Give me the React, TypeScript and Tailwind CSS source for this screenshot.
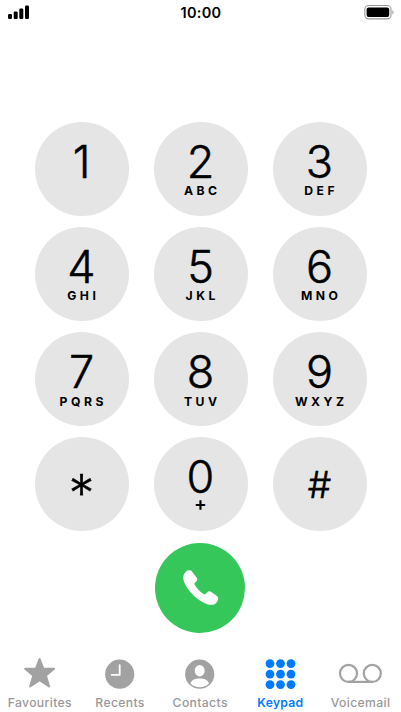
import React from "react";

const font = "font-['Inter','Liberation_Sans',sans-serif]";

type KeyDef = { digit: string; letters?: string };

const keys: KeyDef[] = [
  { digit: "1" },
  { digit: "2", letters: "ABC" },
  { digit: "3", letters: "DEF" },
  { digit: "4", letters: "GHI" },
  { digit: "5", letters: "JKL" },
  { digit: "6", letters: "MNO" },
  { digit: "7", letters: "PQRS" },
  { digit: "8", letters: "TUV" },
  { digit: "9", letters: "WXYZ" },
  { digit: "*" },
  { digit: "0", letters: "+" },
  { digit: "#" },
];

function KeyButton({ digit, letters }: KeyDef) {
  const base = "flex h-[94px] w-[94px] flex-col items-center rounded-full bg-[#e5e5e5] text-black";
  if (digit === "*") {
    return (
      <button className={base}>
        <span className="pt-[30.5px] text-[52px] font-light leading-[52px] [-webkit-text-stroke:0.3px_black]">*</span>
      </button>
    );
  }
  if (digit === "#") {
    return (
      <button className={base}>
        <span className="pt-[29px] text-[37px] font-light leading-[37px] [-webkit-text-stroke:0.6px_black]">#</span>
      </button>
    );
  }
  return (
    <button className={base}>
      <span className="pt-[17px] text-[45px] font-light leading-[45px] [-webkit-text-stroke:0.5px_black]">{digit}</span>
      {letters === "+" ? (
        <span className="-mt-[5px] text-[19px] font-semibold leading-[19px]">+</span>
      ) : (
        <span className="mt-[1.5px] pl-[3.5px] text-[12.2px] font-bold leading-[12px] tracking-[3.5px]">{letters}</span>
      )}
    </button>
  );
}

function StatusBar() {
  return (
    <header className="flex h-[26px] items-start justify-between pl-2 pr-[6px]">
      <svg className="mt-[5px] h-[14px] w-[30px]" viewBox="0 0 30 14">
        <rect x="0" y="9" width="4" height="5" rx="1.2" />
        <rect x="5.7" y="6.5" width="4" height="7.5" rx="1.2" />
        <rect x="11.3" y="3.5" width="4" height="10.5" rx="1.2" />
        <rect x="17" y="0.5" width="4" height="13.5" rx="1.2" />
      </svg>
      <span className="mt-[5px] text-[14.5px] font-semibold leading-4 tracking-[0.3px]">10:00</span>
      <svg className="mt-[4px] h-4 w-[31px]" viewBox="0 0 31 16">
        <rect x="0.8" y="1.5" width="26.2" height="13.4" rx="3.8" fill="none" stroke="#999" strokeWidth="1.1" />
        <rect x="2.6" y="3.4" width="22.6" height="9.7" rx="2" />
        <path d="M28.3 6v4.6c1.8-.8 1.8-3.8 0-4.6Z" fill="#aaa" />
      </svg>
    </header>
  );
}

function StarIcon() {
  return (
    <svg className="h-8 w-8" viewBox="0 0 32 32" fill="#a2a2a2" stroke="#a2a2a2" strokeWidth="2" strokeLinejoin="round">
      <path d="m15.6 2 3.8 9.8h10.7l-8.2 6.7 3.2 11-9.5-6.3-9.5 6.3 3.2-11-8.2-6.7h10.7Z" />
    </svg>
  );
}

function ClockIcon() {
  return (
    <svg className="h-8 w-8" viewBox="0 0 32 32">
      <circle cx="15.7" cy="17.2" r="14.6" fill="#a2a2a2" />
      <path d="M15.7 8.2v9.7H7.7" fill="none" stroke="#fff" strokeWidth="1.8" strokeLinecap="round" strokeLinejoin="round" />
    </svg>
  );
}

function ContactIcon() {
  return (
    <svg className="h-8 w-8" viewBox="0 0 32 32">
      <circle cx="15.7" cy="17.2" r="14.6" fill="#a2a2a2" />
      <ellipse cx="15.7" cy="13.8" rx="5" ry="5.7" fill="#fff" />
      <path d="M6.4 26.4c1.5-3.8 5.2-4.8 9.3-4.8s7.8 1 9.3 4.8a13.2 13.2 0 0 1-18.6 0Z" fill="#fff" />
    </svg>
  );
}

function KeypadIcon() {
  const positions = [5, 15.5, 26];
  return (
    <svg className="h-8 w-8" viewBox="0 0 32 32" fill="#007aff">
      {positions.map((y) =>
        positions.map((x) => <circle key={`${x}-${y}`} cx={x} cy={y + 1.6} r="4.4" />)
      )}
    </svg>
  );
}

function VoicemailIcon() {
  return (
    <svg className="h-8 w-[46px]" viewBox="0 0 46 32" fill="none" stroke="#a2a2a2" strokeWidth="2.2">
      <circle cx="10.5" cy="16.4" r="8.5" />
      <circle cx="34.3" cy="16.4" r="8.5" />
      <path d="M10.5 24.9h23.8" />
    </svg>
  );
}

const tabs = [
  { label: "Favourites", icon: <StarIcon /> },
  { label: "Recents", icon: <ClockIcon /> },
  { label: "Contacts", icon: <ContactIcon /> },
  { label: "Keypad", icon: <KeypadIcon />, active: true },
  { label: "Voicemail", icon: <VoicemailIcon /> },
];

export default function App() {
  return (
    <div className={`flex h-[712px] w-[401px] flex-col overflow-hidden bg-white text-black ${font}`}>
      <StatusBar />
      <main className="flex flex-col items-center pt-[95.6px]">
        <div className="grid grid-cols-3 gap-x-[25px] gap-y-[11.3px]">
          {keys.map((k) => (
            <KeyButton key={k.digit} digit={k.digit} letters={k.letters} />
          ))}
        </div>
        <button className="mt-[11.4px] mr-[0.2px] flex h-[90px] w-[90px] items-center justify-center rounded-full bg-[#35c759]">
          <svg className="ml-[1px] h-9 w-9" viewBox="0 0 36 36" fill="#fff">
            <path d="M2.4 2.2C4.4.1 7.6-.4 9.2 1.7L13.7 7.8c.9 1.3.7 2.5-.4 3.7l-1.4 1.3c-.6.7-.6 1.3-.1 2.2 2 3.5 5.3 6.9 8.8 9 .8.5 1.5.4 2.2-.2l1.4-1.5c1.1-1.2 2.4-1.4 3.7-.5l6 4.1c1.8 1.3 1.6 3.8.2 5.8-2.3 3.3-5.9 3.9-10.3 2.3C13.9 30.3 4.6 21 1.2 12.2-.3 8.2-.1 4.8 2.4 2.2Z" />
          </svg>
        </button>
      </main>
      <nav className="mt-auto flex h-[55px] w-full">
        {tabs.map((t) => (
          <div key={t.label} className="flex w-[80.2px] flex-col items-center">
            {t.icon}
            <span
              className={
                t.active
                  ? "mt-[6px] pr-[0.5px] text-[12.2px] font-semibold leading-[16px] tracking-[0.25px] text-[#007aff]"
                  : "mt-[6px] pr-[0.5px] text-[12.2px] font-medium leading-[16px] tracking-[0.35px] text-[#999]"
              }
            >
              {t.label}
            </span>
          </div>
        ))}
      </nav>
    </div>
  );
}
